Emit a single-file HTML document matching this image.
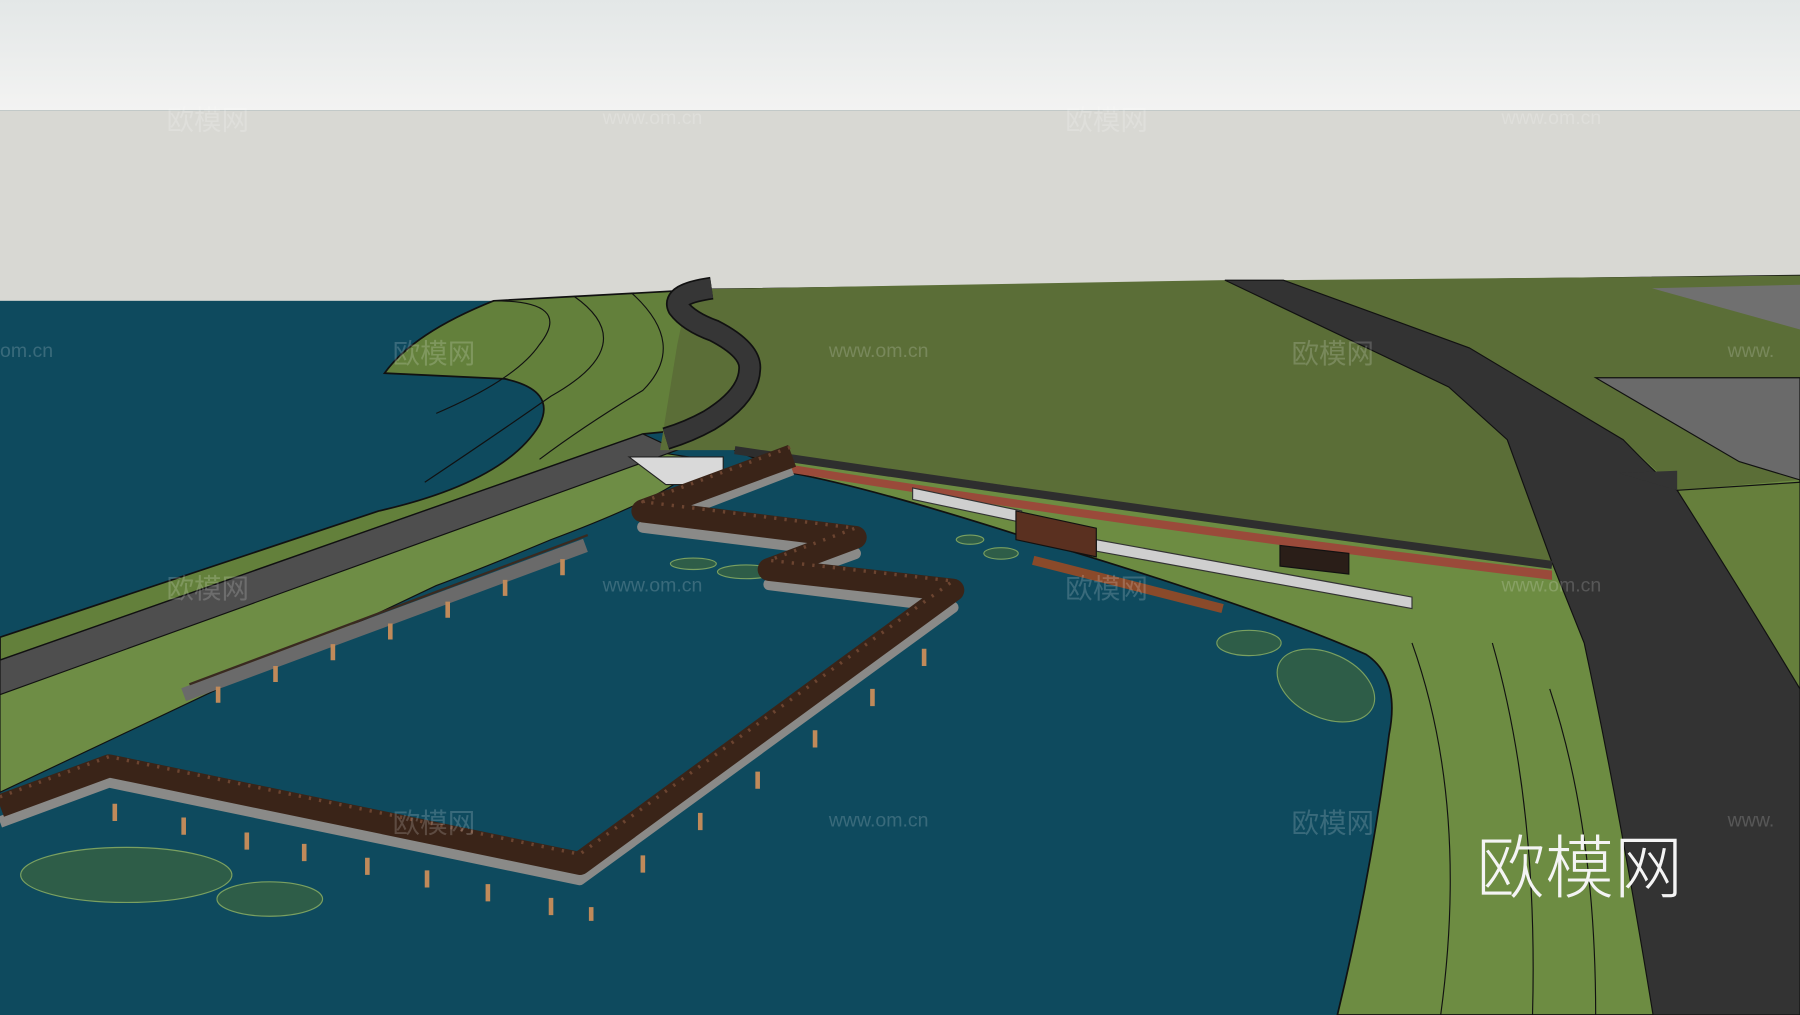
<!DOCTYPE html>
<html><head><meta charset="utf-8"><style>
html,body{margin:0;padding:0;width:1800px;height:1015px;overflow:hidden;background:#0e4a5e}
svg{display:block}
</style></head><body>
<svg width="1800" height="1015" viewBox="0 0 1568 884" preserveAspectRatio="none" xmlns="http://www.w3.org/2000/svg">
<defs><linearGradient id="sky" x1="0" y1="0" x2="0" y2="1"><stop offset="0" stop-color="#e3e7e7"/><stop offset="1" stop-color="#f3f3f2"/></linearGradient></defs>
<rect width="1568" height="96" fill="url(#sky)"/>
<rect y="96" width="1568" height="170" fill="#d8d8d3"/>
<rect y="262" width="1568" height="622" fill="#0e4a5e"/>
<path d="M0,600 L560,392 L600,398 L590,420 Q560,440 480,470 Q420,495 380,510 L0,690 Z" fill="#6e8d45" stroke="#111"/>
<path d="M430,262 L615,252 L590,375 L560,378 L0,575 L0,555 L330,445 Q440,420 470,370 Q485,340 440,330 L335,325 Q360,290 430,262 Z" fill="#63803b" stroke="#111" stroke-width="1.5"/>
<path d="M430,262 Q500,262 470,300 Q450,330 380,360 M500,258 Q560,300 480,345 Q430,380 370,420 M550,255 Q600,300 560,340 Q510,370 470,400" fill="none" stroke="#111"/>
<path d="M0,575 L560,378 L590,392 L0,605 Z" fill="#4e4e4e" stroke="#111"/>
<path d="M620,252 L1568,240 L1568,884 L1165,884 Q1195,760 1210,640 Q1220,590 1190,570 Q1100,530 900,470 Q760,425 690,412 L640,392 Z" fill="#6d8c42" stroke="#111" stroke-width="1.5"/>
<path d="M600,252 L1067,244 L1262,337 L1313,383 L1352,490 Q1200,480 1002,442 Q800,410 640,392 L575,392 L590,300 Z" fill="#5b6e37"/>
<path d="M1118,244 L1568,240 L1568,418 L1461,427 L1414,383 L1280,303 Z" fill="#5b6e37"/>
<path d="M1439,251 L1568,248 L1568,287 Z" fill="#707070"/>
<path d="M1390,329 L1568,329 L1568,418 L1515,402 Z" fill="#6a6a6a" stroke="#111"/>
<path d="M1461,427 L1568,420 L1568,610 Z" fill="#667f3c" stroke="#111"/>
<path d="M690,405 Q1000,455 1352,497 L1352,505 Q1000,462 690,412 Z" fill="#9a4a3a"/>
<path d="M1230,560 Q1280,700 1255,884 M1300,560 Q1340,700 1335,884 M1350,600 Q1390,720 1390,884" fill="none" stroke="#111"/>
<path d="M1067,244 L1118,244 L1280,303 L1414,383 Q1450,420 1461,427 Q1520,520 1568,600 L1568,884 L1440,884 Q1410,700 1380,560 L1352,490 L1313,383 L1262,337 Z" fill="#333" stroke="#111"/>
<path d="M1410,412 L1461,410 L1461,427 Z" fill="#333"/>
<path d="M620,251 Q585,256 591,268 Q600,280 622,288 Q655,305 653,322 Q652,345 618,366 Q600,376 580,382" fill="none" stroke="#111" stroke-width="20"/>
<path d="M620,251 Q585,256 591,268 Q600,280 622,288 Q655,305 653,322 Q652,345 618,366 Q600,376 580,382" fill="none" stroke="#363636" stroke-width="17"/>
<path d="M640,392 Q1000,445 1352,492" fill="none" stroke="#2e2e2e" stroke-width="7"/>
<path d="M548,398 L630,398 L630,422 L580,422 Z" fill="#d9d9d9" stroke="#222"/>
<path d="M795,425 L890,445 L890,455 L795,435 Z M955,470 L1230,520 L1230,530 L955,480 Z" fill="#cfcfcf" stroke="#333"/>
<g fill="#2e5d48" stroke="#7aa060" stroke-width="1">
<ellipse cx="110" cy="762" rx="92" ry="24"/><ellipse cx="235" cy="783" rx="46" ry="15"/>
<ellipse cx="1155" cy="597" rx="45" ry="28" transform="rotate(25 1155 597)"/><ellipse cx="1088" cy="560" rx="28" ry="11"/>
<ellipse cx="604" cy="491" rx="20" ry="5"/><ellipse cx="650" cy="498" rx="25" ry="6"/><ellipse cx="872" cy="482" rx="15" ry="5"/><ellipse cx="845" cy="470" rx="12" ry="4"/>
</g>
<g fill="none" stroke-linejoin="round">
<path d="M0,716 L95,681 L505,766 L830,529 L670,509 L745,482 L560,459 L690,409" stroke="#8a8a88" stroke-width="10"/>
<path d="M0,702 L95,667 L505,752 L830,514 L670,496 L745,468 L560,445 L690,397" stroke="#3a2418" stroke-width="20"/>
<path d="M0,694 L95,659 L505,744 L830,506 L670,488 L745,460 L560,437 L690,389" stroke="#6b4430" stroke-width="3" stroke-dasharray="2 7"/>
<path d="M160,605 L510,475" stroke="#6a6a6a" stroke-width="12"/>
<path d="M165,596 L512,466" stroke="#3a2a20" stroke-width="2"/>
<path d="M900,488 L1065,530" stroke="#8a4a2a" stroke-width="8"/>
</g>
<g stroke="#c08a5a" stroke-width="4">
<path d="M100,700v15M160,712v15M215,725v15M265,735v15M320,747v15M372,758v15M425,770v15M480,782v15M515,790v12M560,745v15M610,708v15M660,672v15M710,636v15M760,600v15M805,565v15"/>
<path d="M190,598v14M240,580v14M290,561v14M340,543v14M390,524v14M440,505v14M490,487v14"/>
</g>
<path d="M885,445 L955,460 L955,485 L885,470 Z" fill="#5a3020" stroke="#111"/>
<path d="M1115,475 L1175,482 L1175,500 L1115,493 Z" fill="#2a1e18" stroke="#111"/>
<g font-family="Liberation Sans, 'Noto Sans CJK SC', sans-serif" fill="#ffffff" fill-opacity="0.18" font-size="24">
<text x="145" y="113">欧模网</text><text x="928" y="113">欧模网</text><text x="342" y="316">欧模网</text><text x="1125" y="316">欧模网</text>
<text x="145" y="521">欧模网</text><text x="928" y="521">欧模网</text><text x="342" y="725">欧模网</text><text x="1125" y="725">欧模网</text>
<g font-size="17"><text x="525" y="108">www.om.cn</text><text x="1308" y="108">www.om.cn</text><text x="0" y="311">om.cn</text><text x="722" y="311">www.om.cn</text><text x="1505" y="311">www.</text><text x="525" y="515">www.om.cn</text><text x="1308" y="515">www.om.cn</text><text x="722" y="720">www.om.cn</text><text x="1505" y="720">www.</text></g>
</g>
<text x="1286" y="777" font-family="'Noto Sans CJK SC', sans-serif" font-size="60" font-weight="300" fill="#f4f4f4">欧模网</text>
</svg>
</body></html>
